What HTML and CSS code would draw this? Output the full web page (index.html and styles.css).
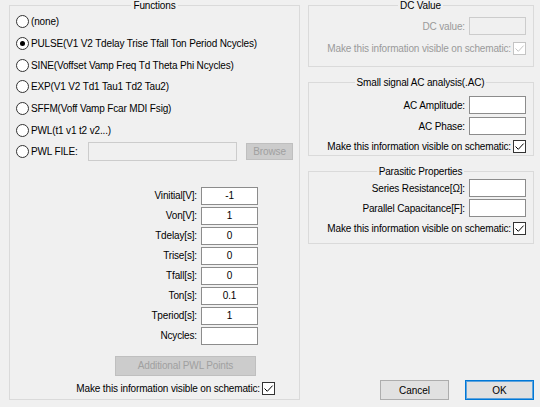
FILE: index.html
```html
<!DOCTYPE html>
<html lang="en">
<head>
    <meta charset="UTF-8">
    <title>Independent Voltage Source</title>
    <link rel="stylesheet" href="styles.css">
</head>
<body>
    <div class="dialog">
        <!-- Left: source functions -->
        <fieldset class="group functions">
            <legend>Functions</legend>
            <div class="options">
                <div class="option"><span class="radio"></span>(none)</div>
                <div class="option"><span class="radio checked"></span>PULSE(V1 V2 Tdelay Trise Tfall Ton Period Ncycles)</div>
                <div class="option"><span class="radio"></span>SINE(Voffset Vamp Freq Td Theta Phi Ncycles)</div>
                <div class="option"><span class="radio"></span>EXP(V1 V2 Td1 Tau1 Td2 Tau2)</div>
                <div class="option"><span class="radio"></span>SFFM(Voff Vamp Fcar MDI Fsig)</div>
                <div class="option"><span class="radio"></span>PWL(t1 v1 t2 v2...)</div>
                <div class="option">
                    <span class="radio"></span>PWL FILE:
                    <span class="field field-file disabled"></span>
                    <span class="button disabled browse">Browse</span>
                </div>
            </div>

            <div class="params">
                <label>Vinitial[V]:</label><span class="field">-1</span>
                <label>Von[V]:</label><span class="field">1</span>
                <label>Tdelay[s]:</label><span class="field">0</span>
                <label>Trise[s]:</label><span class="field">0</span>
                <label>Tfall[s]:</label><span class="field">0</span>
                <label>Ton[s]:</label><span class="field">0.1</span>
                <label>Tperiod[s]:</label><span class="field">1</span>
                <label>Ncycles:</label><span class="field"></span>
            </div>

            <div class="button disabled pwl-points">Additional PWL Points</div>

            <div class="check-row">
                <span>Make this information visible on schematic:</span>
                <span class="check"><svg viewBox="0 0 11 11"><path d="M1.5 5.5l2.8 2.8L9.6 2.6"/></svg></span>
            </div>
        </fieldset>

        <!-- Right: DC, AC and parasitics -->
        <div class="side">
            <fieldset class="group dc">
                <legend>DC Value</legend>
                <div class="form-row muted">
                    <label>DC value:</label><span class="field disabled"></span>
                </div>
                <div class="check-row muted">
                    <span>Make this information visible on schematic:</span>
                    <span class="check disabled"><svg viewBox="0 0 11 11"><path d="M1.5 5.5l2.8 2.8L9.6 2.6"/></svg></span>
                </div>
            </fieldset>

            <fieldset class="group ac">
                <legend>Small signal AC analysis(.AC)</legend>
                <div class="form-row">
                    <label>AC Amplitude:</label><span class="field"></span>
                </div>
                <div class="form-row">
                    <label>AC Phase:</label><span class="field"></span>
                </div>
                <div class="check-row">
                    <span>Make this information visible on schematic:</span>
                    <span class="check"><svg viewBox="0 0 11 11"><path d="M1.5 5.5l2.8 2.8L9.6 2.6"/></svg></span>
                </div>
            </fieldset>

            <fieldset class="group parasitic">
                <legend>Parasitic Properties</legend>
                <div class="form-row">
                    <label>Series Resistance[&#937;]:</label><span class="field"></span>
                </div>
                <div class="form-row">
                    <label>Parallel Capacitance[F]:</label><span class="field"></span>
                </div>
                <div class="check-row">
                    <span>Make this information visible on schematic:</span>
                    <span class="check"><svg viewBox="0 0 11 11"><path d="M1.5 5.5l2.8 2.8L9.6 2.6"/></svg></span>
                </div>
            </fieldset>

            <div class="actions">
                <button class="button">Cancel</button>
                <button class="button default">OK</button>
            </div>
        </div>
    </div>
</body>
</html>
```

FILE: styles.css
```css
* {
    margin: 0;
    padding: 0;
    box-sizing: border-box;
}

body {
    background: #f0f0f0;
    color: #000;
    font-family: "Liberation Sans", Arial, sans-serif;
    font-size: 10px;
    letter-spacing: -0.15px;
}

.dialog {
    display: grid;
    grid-template-columns: 291px 226px;
    column-gap: 8px;
    height: 400px;
    padding-left: 9px;
}

/* Group boxes */
.group {
    border: 1px solid #dadada;
    min-width: 0;
}

.group legend {
    margin: 0 auto;
    padding: 0 2px;
    line-height: 11px;
}

.functions {
    padding: 0 6px 3px 6px;
}

.option {
    display: flex;
    align-items: center;
    height: 21.7px;
    white-space: nowrap;
}

.radio {
    position: relative;
    flex: none;
    width: 13px;
    height: 13px;
    margin-right: 2px;
    border: 1px solid #333;
    border-radius: 50%;
    background: #fff;
}

.radio.checked::after {
    content: "";
    position: absolute;
    inset: 3px;
    border-radius: 50%;
    background: #000;
}

/* Inputs */
.field {
    display: block;
    height: 18px;
    border: 1px solid #8c8c8c;
    background: #fff;
    text-align: center;
    line-height: 16px;
}

.field.disabled {
    border-color: #cccccc;
    background: #f0f0f0;
}

.field-file {
    width: 150px;
    height: 19px;
    margin-left: 10px;
}

.button {
    display: flex;
    align-items: center;
    justify-content: center;
    background: #e1e1e1;
    border: 1px solid #adadad;
    font: inherit;
    color: #000;
}

.button.disabled {
    background: #cccccc;
    border-color: #bfbfbf;
    color: #a0a0a0;
}

.browse {
    width: 47px;
    height: 17px;
    margin-left: 9px;
}

.params {
    display: grid;
    grid-template-columns: 1fr 57px;
    column-gap: 4px;
    row-gap: 2px;
    width: 242px;
    margin-top: 24px;
}

.params label {
    text-align: right;
    line-height: 18px;
}

.pwl-points {
    width: 141px;
    height: 20px;
    margin: 11px 0 0 99px;
}

/* Checkboxes */
.check-row {
    display: flex;
    align-items: center;
    justify-content: flex-end;
    gap: 2px;
    height: 13px;
}

.functions .check-row {
    width: 259px;
    margin-top: 6px;
}

.check {
    flex: none;
    width: 13px;
    height: 13px;
    border: 1px solid #333;
    background: #fff;
}

.check svg {
    display: block;
    width: 11px;
    height: 11px;
    fill: none;
    stroke: #000;
    stroke-width: 1;
}

.check.disabled {
    border-color: #c4c4c4;
}

.check.disabled svg {
    stroke: #c4c4c4;
}

.muted {
    color: #9a9a9a;
}

/* Right column */
.side {
    display: flex;
    flex-direction: column;
}

.form-row {
    display: flex;
    align-items: center;
    justify-content: flex-end;
    gap: 4px;
}

.form-row .field {
    width: 57px;
}

.dc {
    padding: 6px 7px 11px 6px;
}

.dc .check-row {
    margin-top: 7px;
}

.ac {
    margin-top: 10px;
    padding: 8px 7px 2px 6px;
}

.ac .form-row + .form-row {
    margin-top: 3px;
}

.ac .check-row {
    margin-top: 5px;
}

.parasitic {
    margin-top: 10px;
    padding: 2px 7px 8px 6px;
}

.parasitic .form-row + .form-row {
    margin-top: 2px;
}

.parasitic .check-row {
    margin-top: 5px;
}

.actions {
    display: flex;
    justify-content: flex-end;
    gap: 16px;
    margin-top: auto;
}

.actions .button {
    width: 69px;
    height: 20px;
}

.button.default {
    border-color: #0078d7;
    box-shadow: inset 0 0 0 1px #5fa3dc;
}
```
